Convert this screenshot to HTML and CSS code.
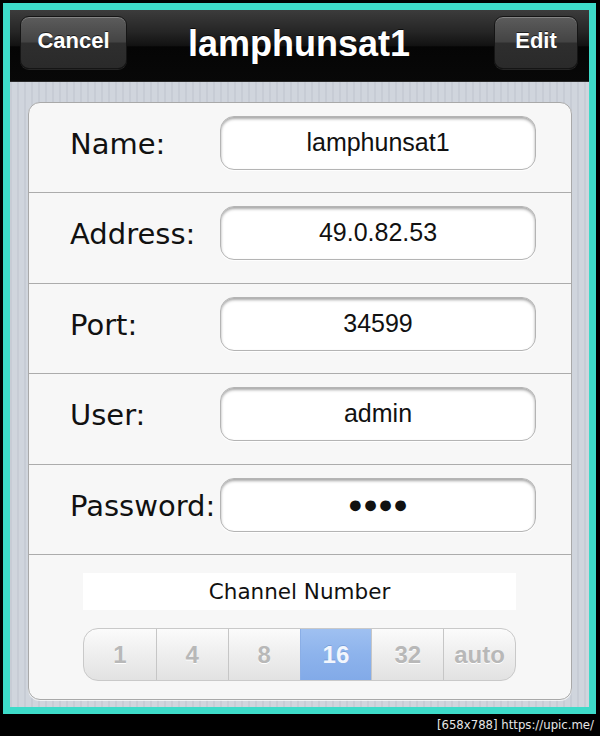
FILE: index.html
```html
<!DOCTYPE html>
<html>
<head>
<meta charset="utf-8">
<link rel="stylesheet" href="styles.css">
</head>
<body>
<div class="frame">
  <header class="navbar">
    <button class="nav-btn cancel">Cancel</button>
    <h1 class="title">lamphunsat1</h1>
    <button class="nav-btn edit">Edit</button>
  </header>
  <main class="content">
    <section class="card">
      <div class="row first">
        <span class="label">Name:</span>
        <div class="field">lamphunsat1</div>
      </div>
      <div class="row">
        <span class="label">Address:</span>
        <div class="field">49.0.82.53</div>
      </div>
      <div class="row">
        <span class="label">Port:</span>
        <div class="field">34599</div>
      </div>
      <div class="row">
        <span class="label">User:</span>
        <div class="field">admin</div>
      </div>
      <div class="row">
        <span class="label">Password:</span>
        <div class="field dots">●●●●</div>
      </div>
      <div class="channels">
        <div class="channel-label">Channel Number</div>
        <div class="segmented">
          <span class="seg">1</span>
          <span class="seg">4</span>
          <span class="seg">8</span>
          <span class="seg active">16</span>
          <span class="seg">32</span>
          <span class="seg">auto</span>
        </div>
      </div>
    </section>
  </main>
</div>
<div class="watermark">[658x788] https://upic.me/</div>
</body>
</html>
```

FILE: styles.css
```css
* { box-sizing: border-box; }
html, body { margin: 0; padding: 0; }
body {
  background: #000;
  width: 600px;
  height: 736px;
  overflow: hidden;
  font-family: "Liberation Sans", Arial, sans-serif;
}
.frame {
  margin: 3px 4px 0 3px;
  width: 593px;
  height: 711px;
  border: 7px solid #3ddbc9;
  display: flex;
  flex-direction: column;
  background: #000;
}
.navbar {
  height: 72px;
  flex: none;
  display: grid;
  grid-template-columns: 1fr auto 1fr;
  align-items: start;
  padding: 6px 11px 0 10px;
  background: linear-gradient(to bottom, #3c3c3c 0%, #262626 30%, #121212 50%, #050505 52%, #080808 100%);
  border-bottom: 1px solid #2a2a2a;
}
.nav-btn {
  height: 53px;
  border: 1px solid #151515;
  border-radius: 9px;
  background: linear-gradient(to bottom, #5c5c5c 0%, #444 48%, #2e2e2e 52%, #2a2a2a 100%);
  box-shadow: inset 0 1px 0 rgba(255,255,255,0.25), 0 1px 0 rgba(255,255,255,0.12);
  color: #fff;
  font-family: "Liberation Sans", Arial, sans-serif;
  font-weight: bold;
  font-size: 22px;
  padding: 0 0 3px;
  text-shadow: 0 -1px 0 rgba(0,0,0,0.6);
}
.cancel { width: 107px; justify-self: start; }
.edit { width: 84px; justify-self: end; }
.title {
  margin: 0;
  color: #fff;
  font-size: 36px;
  font-weight: bold;
  line-height: 53px;
  padding-top: 1px;
  text-shadow: 0 -1px 0 rgba(0,0,0,0.7);
}
.content {
  flex: 1;
  padding: 20px 17px 6px 18px;
  background-color: #cbd0d9;
  background-image: repeating-linear-gradient(to right, #c7ccd5 0px, #c7ccd5 2px, #d0d5dd 2px, #d0d5dd 7px);
}
.card {
  height: 598px;
  background: #f7f7f7;
  border: 1px solid #a9a9a9;
  border-radius: 12px;
  box-shadow: 0 1px 0 rgba(255,255,255,0.7);
  display: flex;
  flex-direction: column;
}
.row {
  height: 90.5px;
  flex: none;
  display: flex;
  align-items: flex-start;
  padding: 13px 35px 0 41px;
  border-bottom: 1px solid #acacac;
}
.row.first { height: 90px; }
.label {
  flex: 1;
  font-family: "DejaVu Sans", Verdana, sans-serif;
  font-size: 29px;
  line-height: 56px;
  color: #111;
}
.field {
  width: 316px;
  height: 54px;
  background: #fff;
  border: 1px solid #b4b4b4;
  border-radius: 14px;
  box-shadow: inset 0 2px 3px rgba(0,0,0,0.35), 0 1px 1px rgba(255,255,255,0.9);
  text-align: center;
  font-size: 25px;
  line-height: 50px;
  color: #111;
}
.channels {
  flex: 1;
  padding: 18px 55px 0 54px;
  display: flex;
  flex-direction: column;
  gap: 18px;
}
.channel-label {
  height: 37px;
  background: #fff;
  text-align: center;
  font-family: "DejaVu Sans", Verdana, sans-serif;
  font-size: 21.5px;
  line-height: 37px;
  color: #111;
}
.segmented {
  height: 53px;
  display: grid;
  grid-template-columns: repeat(6, 1fr);
  border: 1px solid #c9c9c9;
  border-radius: 15px;
  overflow: hidden;
  background: linear-gradient(to bottom, #fbfbfb 0%, #eeeeee 50%, #e2e2e2 100%);
}
.seg {
  display: flex;
  align-items: center;
  justify-content: center;
  font-weight: bold;
  font-size: 24px;
  color: #b8b8b8;
  border-left: 1px solid #c6c6c6;
  text-shadow: 0 1px 0 #fff;
}
.seg:first-child { border-left: none; }
.seg.active {
  background: linear-gradient(to bottom, #9fc0f1 0%, #8db3ec 50%, #82aae8 100%);
  color: #f2f6fd;
  text-shadow: 0 -1px 0 rgba(60,100,170,0.3);
  border-left-color: #8aaee6;
}
.watermark {
  text-align: right;
  padding-right: 6px;
  font-family: "DejaVu Sans", sans-serif;
  font-stretch: condensed;
  font-size: 13px;
  line-height: 22px;
  color: #e6e6e6;
}
```
